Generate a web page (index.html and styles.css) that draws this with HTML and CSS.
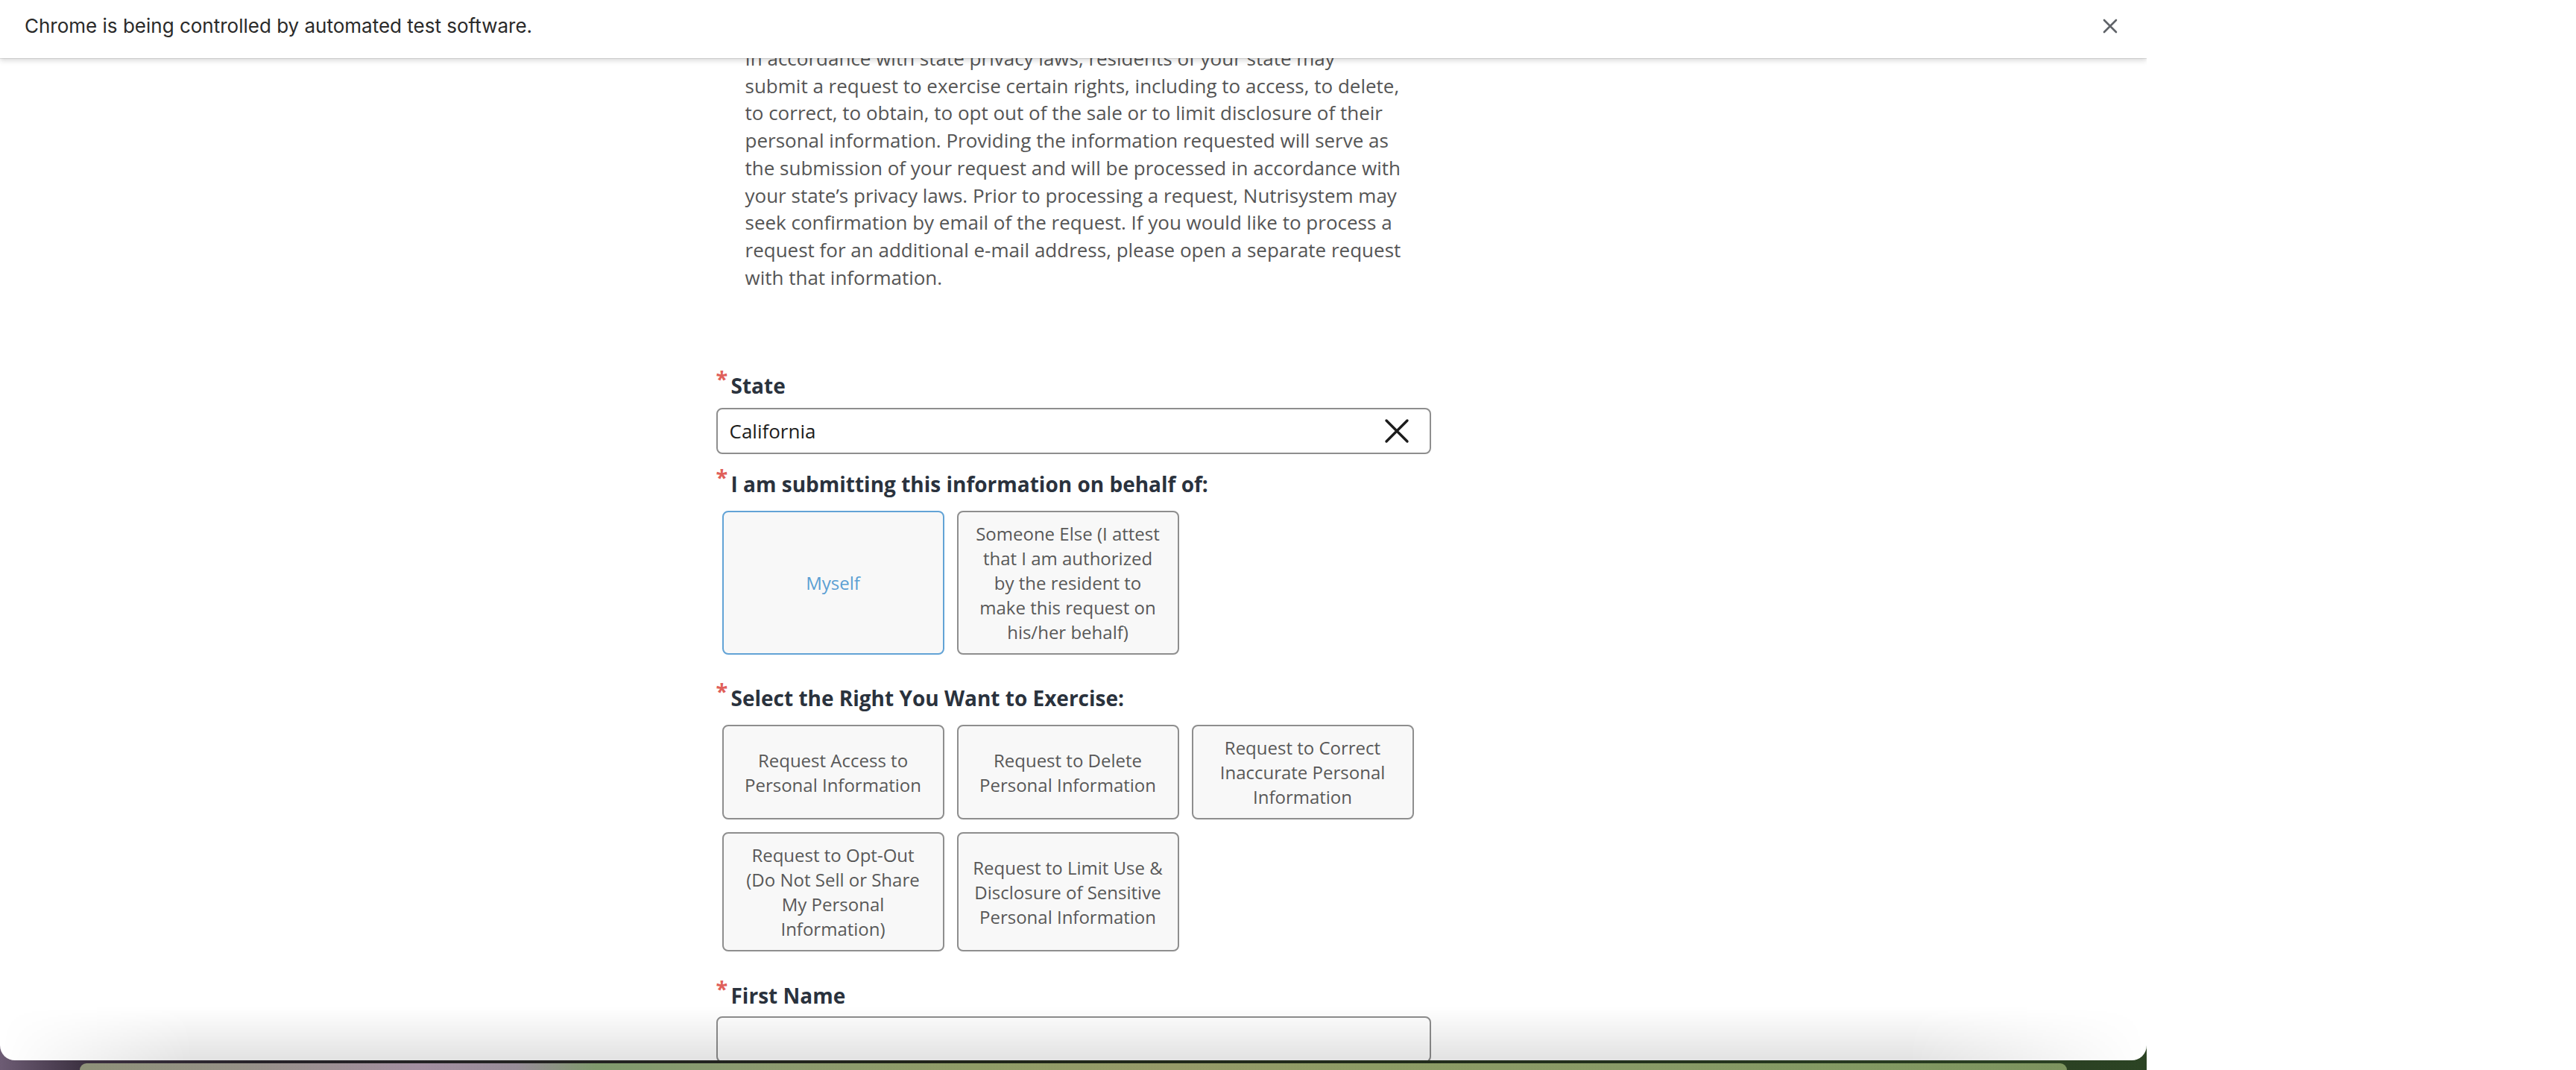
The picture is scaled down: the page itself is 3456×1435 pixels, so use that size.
FILE: index.html
```html
<!DOCTYPE html>
<html lang="en">
<head>
<meta charset="utf-8">
<title>Privacy Request</title>
<link rel="stylesheet" href="styles.css">
</head>
<body>
<div class="screen">
  <div class="window">
    <div class="infobar">
      <span class="infobar-text">Chrome is being controlled by automated test software.</span>
      <span class="infobar-close" aria-label="Close">
        <svg viewBox="0 0 20 20" width="20" height="20"><path d="M2 2 L18 18 M18 2 L2 18" stroke="#5f6368" stroke-width="2.6" stroke-linecap="round" fill="none"/></svg>
      </span>
    </div>
    <div class="viewport">
      <div class="form">
        <p class="intro">In accordance with state privacy laws, residents of your state may submit a request to exercise certain rights, including to access, to delete, to correct, to obtain, to opt out of the sale or to limit disclosure of their personal information. Providing the information requested will serve as the submission of your request and will be processed in accordance with your state’s privacy laws. Prior to processing a request, Nutrisystem may seek confirmation by email of the request. If you would like to process a request for an additional e-mail address, please open a separate request with that information.</p>

        <div class="field field-first">
          <div class="label"><span class="req">*</span><span>State</span></div>
          <div class="select">
            <span class="select-value">California</span>
            <svg class="clear" viewBox="0 0 34 34" width="34" height="34"><path d="M3 3 L31 31 M31 3 L3 31" stroke="#1c1c1c" stroke-width="3.4" stroke-linecap="round" fill="none"/></svg>
          </div>
        </div>

        <div class="field field-after-input">
          <div class="label"><span class="req">*</span><span>I am submitting this information on behalf of:</span></div>
          <div class="options">
            <div class="option option-selected">Myself</div>
            <div class="option">Someone Else (I attest that I am authorized by the resident to make this request on his/her behalf)</div>
          </div>
        </div>

        <div class="field field-after-options">
          <div class="label"><span class="req">*</span><span>Select the Right You Want to Exercise:</span></div>
          <div class="options">
            <div class="option">Request Access to Personal Information</div>
            <div class="option">Request to Delete Personal Information</div>
            <div class="option">Request to Correct Inaccurate Personal Information</div>
            <div class="option">Request to Opt-Out (Do Not Sell or Share My Personal Information)</div>
            <div class="option">Request to Limit Use &amp; Disclosure of Sensitive Personal Information</div>
          </div>
        </div>

        <div class="field field-last">
          <div class="label"><span class="req">*</span><span>First Name</span></div>
          <div class="text-input"></div>
        </div>
      </div>
      <div class="bottom-fade"></div>
    </div>
  </div>
  <div class="desktop"><div class="dock"></div></div>
</div>
</body>
</html>
```

FILE: styles.css
```css
html, body {
  margin: 0;
  padding: 0;
  background: #ffffff;
}
body {
  width: 3456px;
  height: 1435px;
  overflow: hidden;
}
.screen {
  width: 2880px;
  height: 1435px;
  display: flex;
  flex-direction: column;
  background: linear-gradient(to right, #6d5c74 0, #3b3040 4%, #262228 12%, #1f2419 45%, #22301c 75%, #2c4424 100%);
}
.window {
  flex: none;
  height: 1422px;
  background: #ffffff;
  border-radius: 0 0 20px 20px;
  overflow: hidden;
  display: flex;
  flex-direction: column;
  position: relative;
}
.infobar {
  flex: none;
  height: 78px;
  box-sizing: border-box;
  padding: 0 39px 9px 33px;
  display: flex;
  align-items: center;
  justify-content: space-between;
  background: #ffffff;
  position: relative;
  z-index: 2;
  box-shadow: 0 1px 0 rgba(0,0,0,0.10), 0 3px 7px rgba(0,0,0,0.16);
  font-family: Inter, "Liberation Sans", sans-serif;
  font-size: 26px;
  color: #2a2a2a;
}
.infobar-close {
  display: flex;
  width: 20px;
  height: 20px;
}
.viewport {
  flex: 1;
  overflow: hidden;
  position: relative;
}
.form {
  width: 959px;
  margin: 0 auto;
  font-family: "Open Sans", "Noto Sans", sans-serif;
}
.intro {
  width: 881px;
  margin: -18px 0 0 39px;
  font-size: 26px;
  line-height: 36.7px;
  color: #555555;
}
.field-first {
  margin-top: 108px;
}
.field-after-input {
  margin-top: 21px;
}
.field-after-options {
  margin-top: 39px;
}
.field-last {
  margin-top: 40px;
}
.label {
  display: flex;
  align-items: flex-start;
  font-size: 28px;
  line-height: 38px;
  font-weight: 700;
  color: #2a323d;
}
.req {
  color: #e0605a;
  font-size: 29px;
  line-height: 28px;
  font-weight: 700;
  width: 20px;
  flex: none;
  margin-top: -4px;
}
.select {
  margin-top: 11px;
  height: 62px;
  box-sizing: border-box;
  border: 2px solid #8e8e8e;
  border-radius: 8px;
  display: flex;
  align-items: center;
  justify-content: space-between;
  padding: 0 27px 0 16px;
}
.select-value {
  font-size: 26px;
  color: #1c1c1c;
}
.clear {
  width: 34px;
  height: 34px;
}
.options {
  margin-top: 17px;
  padding-left: 8px;
  display: flex;
  flex-wrap: wrap;
  gap: 17px;
}
.option {
  width: 298px;
  box-sizing: border-box;
  border: 2px solid #8e8e8e;
  border-radius: 8px;
  background: #f8f8f8;
  padding: 12px 19px;
  display: flex;
  align-items: center;
  justify-content: center;
  text-align: center;
  font-size: 24px;
  line-height: 33px;
  color: #585858;
}
.option-selected {
  border-color: #62a3d6;
  color: #5b9fd3;
}
.text-input {
  margin-top: 9px;
  height: 62px;
  box-sizing: border-box;
  border: 2px solid #8e8e8e;
  border-radius: 8px;
}
.bottom-fade {
  position: absolute;
  left: 0;
  right: 0;
  bottom: 0;
  height: 72px;
  pointer-events: none;
  background: linear-gradient(to bottom, rgba(0,0,0,0) 0, rgba(0,0,0,0.05) 45%, rgba(0,0,0,0.115) 100%);
  -webkit-mask-image: linear-gradient(to right, transparent 0, #000 260px, #000 2560px, transparent 2880px);
  mask-image: linear-gradient(to right, transparent 0, #000 260px, #000 2560px, transparent 2880px);
}
.desktop {
  flex: 1;
  display: flex;
  flex-direction: column;
  padding-top: 4px;
}
.dock {
  flex: 1;
  margin: 0 107px 0 107px;
  border-radius: 22px 22px 0 0;
  background: linear-gradient(to right, #8d9178 0, #959086 8%, #a38ea0 17%, #978c98 22%, #7f9a6c 26%, #8b9a70 33%, #8f9c66 45%, #969a68 55%, #8c9c64 65%, #889a66 78%, #829962 90%, #7c935e 100%);
}
```
